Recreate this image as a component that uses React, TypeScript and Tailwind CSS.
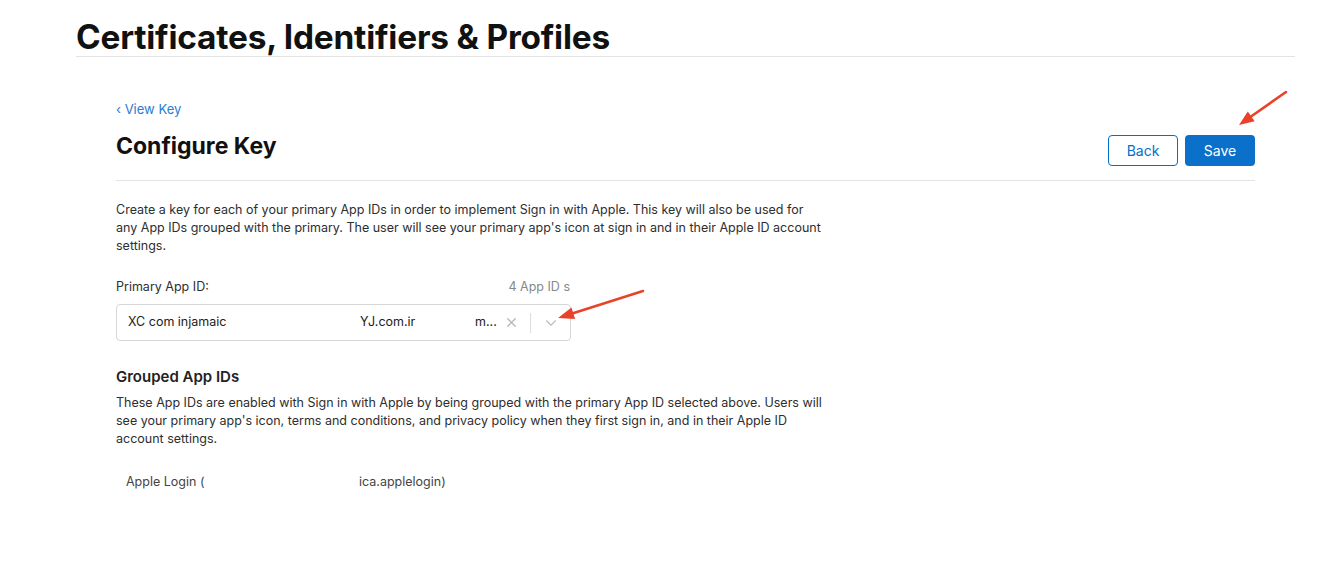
import { ChevronDown, X } from 'lucide-react';

const font = { fontFamily: 'Inter, "Liberation Sans", sans-serif' };

// Red annotation arrows drawn over the page
function Arrows() {
    return (
        <svg className="pointer-events-none absolute inset-0 h-full w-full" viewBox="0 0 1336 566" fill="none">
            <line x1="1286" y1="92" x2="1251" y2="116.5" stroke="#e8432a" strokeWidth="2.6" strokeLinecap="round" />
            <path d="M1239 125 L1254.7 121.3 L1247.8 111.5 Z" fill="#e8432a" />
            <line x1="643" y1="291" x2="573" y2="313.2" stroke="#e8432a" strokeWidth="2.6" strokeLinecap="round" />
            <path d="M558 318 L575.1 318.9 L571.5 307.4 Z" fill="#e8432a" />
        </svg>
    );
}

export default function App() {
    return (
        <div className="relative h-[566px] w-[1336px] overflow-hidden bg-white text-[#2e2e2e]" style={font}>
            <div className="ml-[76px] w-[1219px]">
                <h1 className="pt-[19px] pb-[1px] text-[33.4px] leading-[36px] font-bold tracking-[-0.2px] text-[#111]">
                    Certificates, Identifiers &amp; Profiles
                </h1>
                <div className="h-px bg-[#e3e3e3]" />

                <div className="px-[40px] pt-[39px]">
                    <a className="text-[13px] leading-[18px] text-[#2a7bd0]">‹ View Key</a>
                    <div className="mt-[11px] flex items-start justify-between pb-[14px]">
                        <h2 className="text-[23px] leading-[30px] font-bold text-[#111]">Configure Key</h2>
                        <div className="mt-[4px] flex gap-[7px]">
                            <button className="h-[31px] w-[70px] rounded-[4px] border border-[#0070c9] text-[14px] text-[#0070c9]">
                                Back
                            </button>
                            <button className="h-[31px] w-[70px] rounded-[4px] bg-[#0a70c9] text-[14px] text-white">
                                Save
                            </button>
                        </div>
                    </div>
                    <div className="h-px bg-[#e3e3e3]" />

                    <p className="mt-[20px] w-[708px] text-[12.5px] leading-[18px]">
                        Create a key for each of your primary App IDs in order to implement Sign in with Apple. This key will also be used for
                        any App IDs grouped with the primary. The user will see your primary app's icon at sign in and in their Apple ID account
                        settings.
                    </p>

                    <div className="mt-[23px] flex w-[454px] items-end justify-between text-[12.5px] leading-[18px]">
                        <span>Primary App ID:</span>
                        <span className="text-[#888]">4 App ID s</span>
                    </div>
                    <div className="mt-[8px] flex h-[37px] w-[455px] items-center rounded-[4px] border border-[#d6d6d6] pl-[11px] text-[12.5px] text-[#222]">
                        <span className="w-[232px]">XC com injamaic</span>
                        <span className="w-[115px]">YJ.com.ir</span>
                        <span className="flex-1">m...</span>
                        <X size={15} className="text-[#b5b5b5]" strokeWidth={2} />
                        <span className="mx-[11px] h-[20px] w-px bg-[#ddd]" />
                        <ChevronDown size={18} className="mr-[10px] text-[#bdbdbd]" strokeWidth={1.5} />
                    </div>

                    <h3 className="mt-[26px] text-[15px] leading-[20px] font-semibold text-[#222]">Grouped App IDs</h3>
                    <p className="mt-[7px] w-[708px] text-[12.5px] leading-[18px]">
                        These App IDs are enabled with Sign in with Apple by being grouped with the primary App ID selected above. Users will
                        see your primary app's icon, terms and conditions, and privacy policy when they first sign in, and in their Apple ID
                        account settings.
                    </p>
                    <div className="mt-[25px] flex pl-[10px] text-[12.5px] leading-[18px] text-[#444]">
                        <span className="w-[233px]">Apple Login (</span>
                        <span>ica.applelogin)</span>
                    </div>
                </div>
            </div>

            <Arrows />
        </div>
    );
}
